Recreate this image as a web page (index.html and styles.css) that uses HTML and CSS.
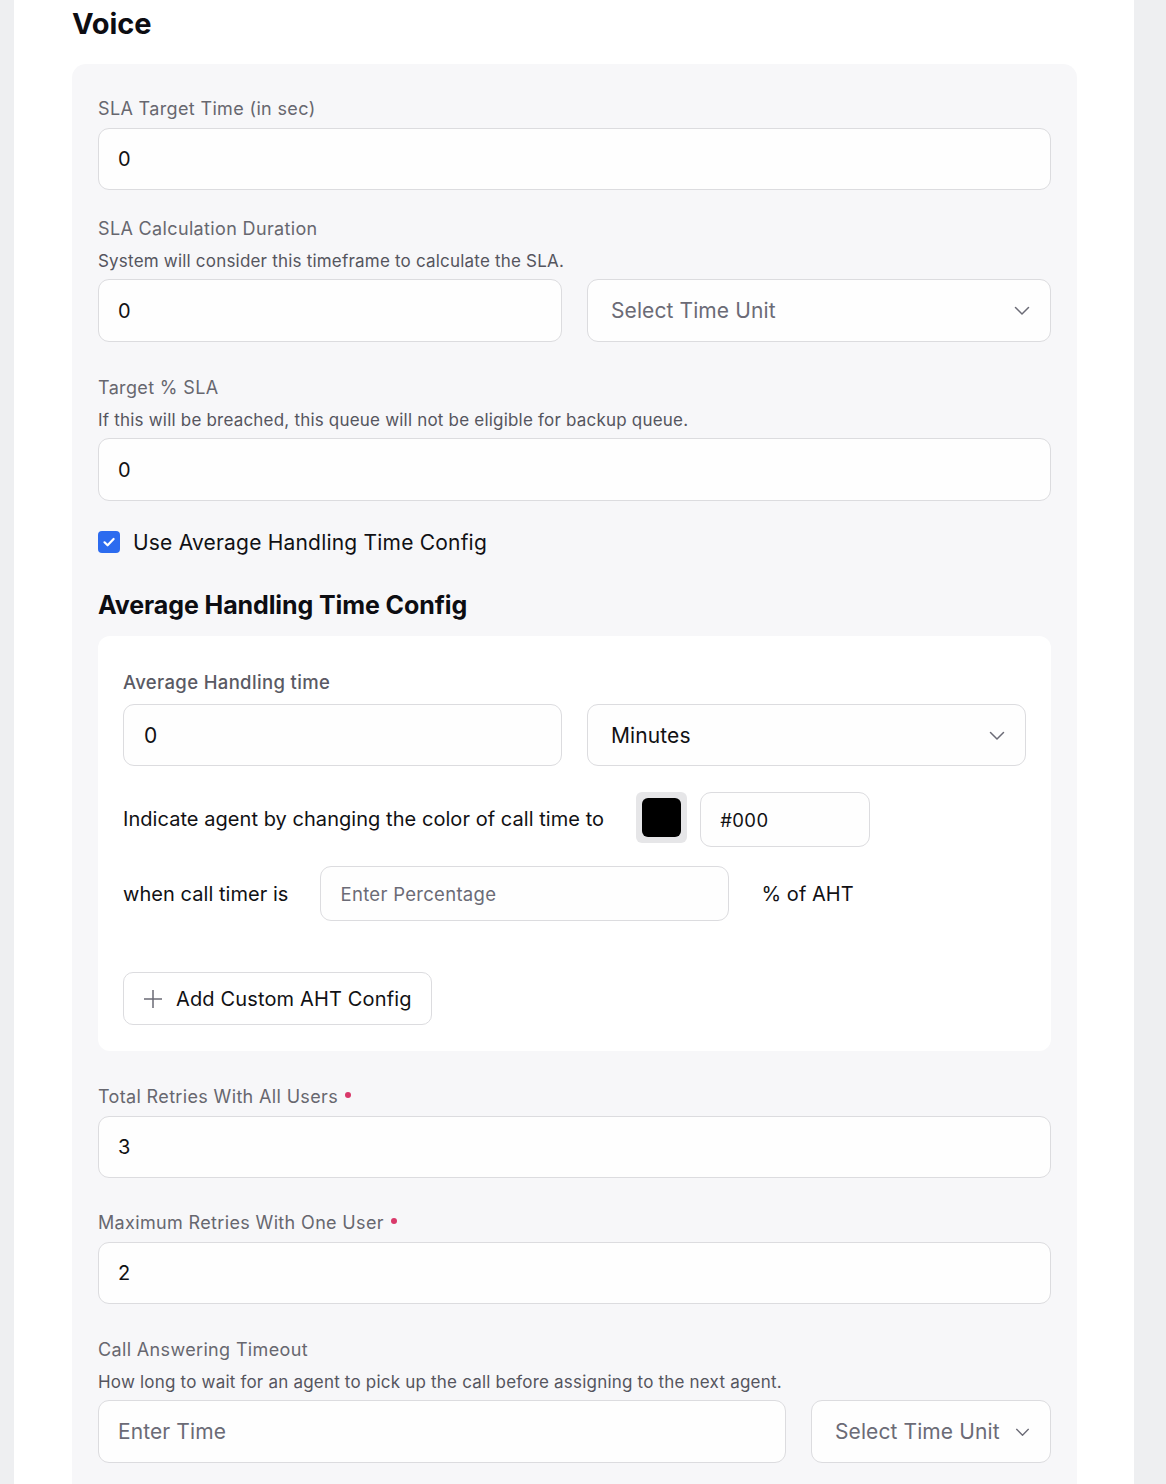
FILE: index.html
```html
<!DOCTYPE html>
<html>
<head>
<meta charset="utf-8">
<link rel="stylesheet" href="styles.css">
</head>
<body>
<div class="strip-left"></div>
<main class="main">
  <h1 class="title">Voice</h1>
  <section class="card">
    <div class="field f-first">
      <div class="label">SLA Target Time (in sec)</div>
      <div class="input"><span class="val">0</span></div>
    </div>

    <div class="field f-2">
      <div class="label">SLA Calculation Duration</div>
      <div class="desc">System will consider this timeframe to calculate the SLA.</div>
      <div class="row-half">
        <div class="input"><span class="val">0</span></div>
        <div class="input select"><span class="ph">Select Time Unit</span>
          <svg class="chev" viewBox="0 0 16 10" width="16" height="10"><path d="M1.5 1.5 L8 8 L14.5 1.5" fill="none" stroke="#6b6b76" stroke-width="1.5" stroke-linecap="round" stroke-linejoin="round"/></svg>
        </div>
      </div>
    </div>

    <div class="field f-3">
      <div class="label">Target % SLA</div>
      <div class="desc">If this will be breached, this queue will not be eligible for backup queue.</div>
      <div class="input"><span class="val">0</span></div>
    </div>

    <div class="check-row">
      <span class="checkbox">
        <svg viewBox="0 0 22 22" width="22" height="22"><path d="M6.5 11.3 L9.6 14.3 L15.6 8" fill="none" stroke="#fff" stroke-width="2.2" stroke-linecap="round" stroke-linejoin="round"/></svg>
      </span>
      <span class="check-text">Use Average Handling Time Config</span>
    </div>

    <h2 class="subhead">Average Handling Time Config</h2>

    <div class="inner">
      <div class="label strong">Average Handling time</div>
      <div class="row-half inner-row">
        <div class="input"><span class="val">0</span></div>
        <div class="input select"><span class="val">Minutes</span>
          <svg class="chev" viewBox="0 0 16 10" width="16" height="10"><path d="M1.5 1.5 L8 8 L14.5 1.5" fill="none" stroke="#6b6b76" stroke-width="1.5" stroke-linecap="round" stroke-linejoin="round"/></svg>
        </div>
      </div>
      <div class="color-row">
        <span class="text20">Indicate agent by changing the color of call time to</span>
        <span class="swatch"><span class="swatch-in"></span></span>
        <div class="input small hex"><span class="val18">#000</span></div>
      </div>
      <div class="timer-row">
        <span class="text20">when call timer is</span>
        <div class="input small pct"><span class="ph18">Enter Percentage</span></div>
        <span class="text20">% of AHT</span>
      </div>
      <div class="btn">
        <svg viewBox="0 0 20 20" width="20" height="20"><path d="M10 1 V19 M1 10 H19" fill="none" stroke="#6b6b76" stroke-width="1.5"/></svg>
        <span>Add Custom AHT Config</span>
      </div>
    </div>

    <div class="field f-after f-after-first">
      <div class="label">Total Retries With All Users<span class="req"></span></div>
      <div class="input"><span class="val">3</span></div>
    </div>

    <div class="field f-after">
      <div class="label">Maximum Retries With One User<span class="req"></span></div>
      <div class="input"><span class="val">2</span></div>
    </div>

    <div class="field f-after f-last">
      <div class="label">Call Answering Timeout</div>
      <div class="desc">How long to wait for an agent to pick up the call before assigning to the next agent.</div>
      <div class="row-last">
        <div class="input"><span class="ph">Enter Time</span></div>
        <div class="input select"><span class="ph">Select Time Unit</span>
          <svg class="chev" viewBox="0 0 16 10" width="16" height="10"><path d="M1.5 1.5 L8 8 L14.5 1.5" fill="none" stroke="#6b6b76" stroke-width="1.5" stroke-linecap="round" stroke-linejoin="round"/></svg>
        </div>
      </div>
    </div>
  </section>
</main>
<div class="strip-right"></div>
</body>
</html>
```

FILE: styles.css
```css
* { box-sizing: border-box; }
html, body { margin: 0; padding: 0; }
body {
  display: flex;
  min-height: 1484px;
  height: 1484px;
  overflow: hidden;
  background: #eeeff1;
  font-family: Inter, "Noto Sans", "Liberation Sans", sans-serif;
  color: #111114;
}
.strip-left { width: 14px; flex: none; background: #eeeff1; }
.strip-right { flex: 1; background: #eeeff1; }
.main {
  width: 1120px;
  flex: none;
  background: #ffffff;
  padding-left: 58px;
}
.title {
  margin: 0;
  font-size: 29px;
  line-height: 48px;
  font-weight: 700;
  color: #0d0d12;
  letter-spacing: -0.1px;
}
.card {
  margin-top: 16px;
  width: 1005px;
  background: #f7f7f9;
  border-radius: 14px;
  padding: 33px 26px 40px 26px;
}
.label {
  font-size: 18px;
  line-height: 24px;
  color: #67676f;
  display: flex;
  align-items: center;
  letter-spacing: 0.35px;
}
.label.strong { font-weight: 500; color: #5a5a64; font-size: 18.5px; letter-spacing: 0.35px; }
.desc {
  font-size: 17px;
  line-height: 22px;
  color: #55555e;
  margin-top: 9px;
  letter-spacing: 0.2px;
}
.field > .input, .field > .row-half, .field > .row-last { margin-top: 7px; }
.f-2 { margin-top: 27px; }
.f-3 { margin-top: 34px; }
.f-after { margin-top: 33px; }
.f-after-first { margin-top: 34px; }
.f-last { margin-top: 34px; }
.req {
  width: 6px; height: 6px; border-radius: 50%;
  background: #d9396a;
  margin-left: 7px;
  margin-top: -4px;
}
.input {
  height: 62px;
  border: 1px solid #dcdcdf;
  border-radius: 11px;
  background: #fefefe;
  display: flex;
  align-items: center;
  padding-left: 19px;
  padding-right: 20px;
}
.val { font-size: 20px; color: #111114; }
.ph { font-size: 21px; color: #6b6b76; letter-spacing: 0.1px; }
.val18 { font-size: 18.5px; color: #111114; letter-spacing: 0.4px; }
.ph18 { font-size: 18.5px; color: #6b6b76; letter-spacing: 0.3px; }
.select { padding-left: 23px; justify-content: space-between; }
.row-half {
  display: grid;
  grid-template-columns: 1fr 1fr;
  gap: 25px;
}
.row-half .input { height: 63px; }
.f-3 .input { height: 63px; }
.row-last {
  display: grid;
  grid-template-columns: 1fr 240px;
  gap: 25px;
}
.row-last .input { height: 63px; }
.chev { flex: none; margin-top: 1px; }
.row-last .chev { width: 15px; height: 9px; }

.check-row {
  margin-top: 30px;
  display: flex;
  align-items: center;
  height: 22px;
}
.checkbox {
  width: 22px; height: 22px;
  border-radius: 4px;
  background: #2c6bef;
  display: inline-flex;
}
.check-text {
  margin-left: 13px;
  font-size: 21px;
  color: #111114;
  letter-spacing: 0.2px;
}
.subhead {
  margin: 36px 0 0 0;
  font-size: 25px;
  line-height: 32px;
  font-weight: 700;
  color: #0d0d12;
  letter-spacing: -0.1px;
}
.inner {
  margin-top: 15px;
  background: #ffffff;
  border-radius: 12px;
  padding: 34px 25px 26px 25px;
}
.inner-row { margin-top: 10px; }
.inner-row .input { height: 62px; }
.inner-row .input:first-child { padding-left: 20px; }
.inner-row .val { font-size: 21px; letter-spacing: 0.1px; }
.text20 { font-size: 20px; color: #111114; letter-spacing: 0.05px; }
.color-row {
  margin-top: 26px;
  display: flex;
  align-items: flex-start;
  height: 55px;
}
.color-row .text20 { line-height: 55px; }
.swatch {
  margin-left: 32px;
  width: 51px; height: 51px;
  border-radius: 6px;
  background: #e6e6e8;
  display: flex;
  align-items: center;
  justify-content: center;
}
.swatch-in {
  width: 39px; height: 39px;
  border-radius: 6px;
  background: #000;
}
.input.small { height: 55px; border-radius: 11px; }
.hex { width: 170px; margin-left: 13px; padding-left: 19px; }
.timer-row {
  margin-top: 19px;
  display: flex;
  align-items: center;
}
.pct { width: 409px; margin-left: 32px; margin-right: 32px; }
.btn {
  margin-top: 51px;
  width: 309px;
  height: 53px;
  border: 1px solid #dcdcdf;
  border-radius: 10px;
  background: #fff;
  display: flex;
  align-items: center;
  padding-left: 19px;
  font-size: 20px;
  color: #111114;
  letter-spacing: 0.15px;
}
.btn svg { margin-right: 13px; }
```
